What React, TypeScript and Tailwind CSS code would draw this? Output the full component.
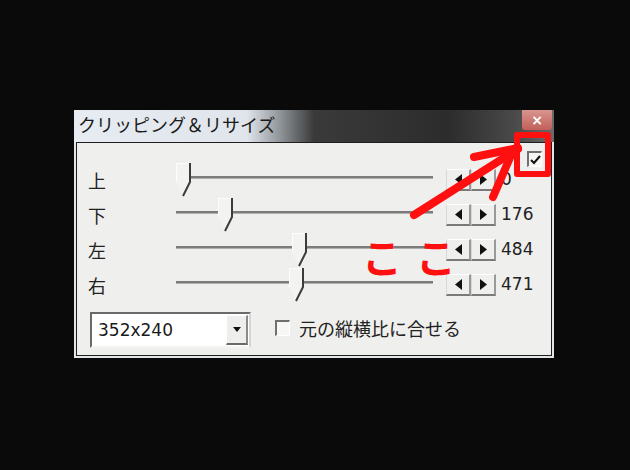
import React from 'react';

const jp = { fontFamily: '"Noto Sans CJK JP", "Noto Sans", sans-serif' };
const num = { fontFamily: '"DejaVu Sans", "Liberation Sans", sans-serif' };

const rows = [
  { label: '上', value: 0 },
  { label: '下', value: 176 },
  { label: '左', value: 484 },
  { label: '右', value: 471 },
];

const Thumb: React.FC<{ value: number }> = ({ value }) => {
  // thumb's right edge sits at 14px + value * 0.24 from the slider start
  const left = value * 0.24;
  return (
    <svg className="absolute top-[1px]" style={{ left }} width="16" height="35" viewBox="0 0 16 35">
      <polygon points="0,0 14,0 14,19 7,33 0,19" fill="#f3f4f2" />
      <polyline points="0,19 0,0 14,0" fill="none" stroke="#ffffff" strokeWidth="1.5" />
      <polyline points="14,0 14,19 7,33" fill="none" stroke="#3c3c3c" strokeWidth="2" />
    </svg>
  );
};

const Spin: React.FC = () => (
  <div className="flex h-[22px] w-[50px]">
    {[0, 1].map((i) => (
      <div
        key={i}
        className="flex h-full w-[25px] items-center justify-center border-t border-l border-b-2 border-r-2 border-t-white border-l-[#d8d8d8] border-b-[#7a7a7a] border-r-[#9a9a9a]"
      >
        <svg width="7" height="11" viewBox="0 0 7 11">
          {i === 0 ? <polygon points="7,0 0,5.5 7,11" fill="#111" /> : <polygon points="0,0 7,5.5 0,11" fill="#111" />}
        </svg>
      </div>
    ))}
  </div>
);

const Check: React.FC<{ checked?: boolean }> = ({ checked }) => (
  <div className="flex h-[16px] w-[15px] shrink-0 items-center justify-center border-t-2 border-l-2 border-t-[#707070] border-l-[#707070] border-b border-r border-b-white border-r-white bg-[#f7f7f6]">
    {checked && (
      <svg width="11" height="10" viewBox="0 0 11 10">
        <polyline points="1,5 4,8 10,1" fill="none" stroke="#111" strokeWidth="2" />
      </svg>
    )}
  </div>
);

export default function App() {
  return (
    <div className="relative h-[470px] w-[630px] overflow-hidden bg-[#0a0a0a] pt-[110px] pl-[74px]">
      {/* Window */}
      <div className="flex h-[248px] w-[480px] flex-col bg-[#e2e6e9]">
        {/* Title bar */}
        <div className="flex h-[32px] items-start justify-between bg-[linear-gradient(to_right,#e6ecf1_0%,#dfe5ea_36%,#8e9498_43%,#3a3a3a_50%,#2c2c2c_78%,#4a4a4a_92%,#6a6a6a_100%)]">
          <div className="pl-[4px] pt-[1px] text-[18px] leading-[26px] text-[#1a1a1a]" style={jp}>
            クリッピング＆リサイズ
          </div>
          <div className="mr-[2px] flex h-[20px] w-[30px] items-center justify-center rounded-b-[3px] bg-[linear-gradient(to_bottom,#d99490,#c06058)] text-[14px] font-bold leading-none text-white" style={num}>
            ×
          </div>
        </div>

        {/* Client area */}
        <div className="mx-[2px] mb-[2px] flex flex-1 flex-col border border-[#1e1e1e] bg-[#efefed]">
          <div className="flex h-[19px] justify-end pr-[9px] pt-[8px]">
            <Check checked />
          </div>

          {rows.map((r) => (
            <div key={r.label} className="flex h-[35px] items-center pl-[11px]">
              <div className="w-[88px] text-[18px] leading-none text-[#222]" style={jp}>
                {r.label}
              </div>
              <div className="relative h-[35px] w-[264px]">
                <div className="mt-[14px] h-[3px] w-[257px] bg-[#7c7c7c] border-b border-b-[#b0b0b0]" />
                <Thumb value={r.value} />
              </div>
              <div className="ml-[6px]">
                <Spin />
              </div>
              <div className="ml-[5px] text-[17px] leading-none text-[#222]" style={num}>
                {r.value}
              </div>
            </div>
          ))}

          <div className="mt-[10px] flex items-center pl-[13px]">
            <div className="flex h-[36px] w-[161px] items-center justify-between border-t-2 border-l-2 border-t-[#6a6a6a] border-l-[#6a6a6a] border-b-2 border-r-2 border-b-[#f4f4f4] border-r-[#d6d6d6] bg-white">
              <span className="pl-[6px] text-[17px] leading-none text-[#1a1a1a]" style={num}>
                352x240
              </span>
              <div className="mr-[1px] flex h-[30px] w-[22px] items-center justify-center border-t border-l border-t-white border-l-white border-b-2 border-r-2 border-b-[#6a6a6a] border-r-[#8a8a8a] bg-[#eeeeec]">
                <svg width="8" height="5" viewBox="0 0 8 5">
                  <polygon points="0,0 8,0 4,5" fill="#111" />
                </svg>
              </div>
            </div>
            <div className="ml-[24px] mt-[-4px] flex items-center gap-[9px]">
              <Check />
              <span className="text-[18px] leading-none text-[#222]" style={jp}>
                元の縦横比に合せる
              </span>
            </div>
          </div>
        </div>
      </div>

      {/* Red annotations drawn over the screenshot */}
      <div className="absolute left-[514px] top-[132px] h-[45px] w-[37px] rounded-[3px] border-[6px] border-[#ff1010]" />
      <svg className="pointer-events-none absolute left-0 top-0" width="630" height="470" viewBox="0 0 630 470">
        <g stroke="#ff1010" strokeWidth="8" strokeLinecap="round" fill="none">
          <line x1="414" y1="215" x2="518" y2="149" />
          <line x1="474" y1="157" x2="518" y2="148" />
          <line x1="493" y1="197" x2="512" y2="153" />
        </g>
      </svg>
      <div className="absolute left-[362px] top-[236px] text-[40px] font-bold leading-none tracking-[14px] text-[#ff1010]" style={jp}>
        ここ
      </div>
    </div>
  );
}
